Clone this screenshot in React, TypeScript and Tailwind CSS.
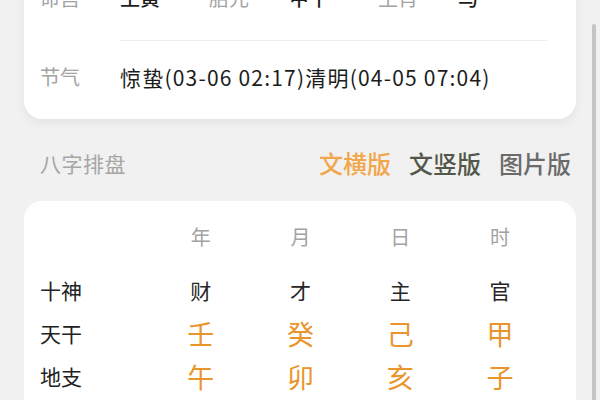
import React from "react";

const font = { fontFamily: '"Noto Sans CJK SC", "Noto Sans", sans-serif' };

function InfoPair({ label, value }: { label: string; value: string }) {
  return (
    <div className="flex w-[199px] items-center">
      <span className="w-[80px] text-[20px] leading-[20px] text-[#a3a3a3]">{label}</span>
      <span className="text-[20px] leading-[20px] font-medium text-[#1c1c1c]">{value}</span>
    </div>
  );
}

const cols = ["年", "月", "日", "时"];
const shishen = ["财", "才", "主", "官"];
const tiangan = ["壬", "癸", "己", "甲"];
const dizhi = ["午", "卯", "亥", "子"];

function Row({ label, items, orange }: { label: string; items: string[]; orange?: boolean }) {
  return (
    <div className="flex h-[43px] items-center">
      <span className="w-[111px] text-[21px] leading-[21px] text-[#222]">{label}</span>
      {items.map((c) => (
        <span
          key={c}
          className={
            orange
              ? "w-[100px] text-center text-[27px] leading-[27px] text-[#ea952c]"
              : "w-[100px] text-center text-[21px] leading-[21px] text-[#262626]"
          }
        >
          {c}
        </span>
      ))}
    </div>
  );
}

export default function App() {
  return (
    <div className="relative h-[400px] w-[600px] overflow-hidden bg-[#f1f1f1]" style={font}>
      <div className="px-[24px]">
        {/* Card 1 */}
        <div className="mt-[-40px] rounded-[18px] bg-white pl-[16px] pr-[29px] shadow-[0_4px_10px_rgba(0,0,0,0.06)]">
          <div className="flex pt-[28px] pb-[32px]">
            <InfoPair label="命宫" value="土黄" />
            <InfoPair label="胎元" value="甲午" />
            <InfoPair label="生肖" value="马" />
          </div>
          <div className="ml-[80px] h-px bg-[#ececec]" />
          <div className="flex items-center pt-[26px] pb-[32px]">
            <span className="w-[80px] text-[20px] leading-[20px] text-[#a3a3a3]">节气</span>
            <span className="text-[21px] leading-[20px] tracking-[1.2px] text-[#1c1c1c]">
              惊蛰(03-06 02:17)清明(04-05 07:04)
            </span>
          </div>
        </div>

        {/* Tabs row */}
        <div className="flex h-[82px] items-center pt-[6px] pl-[16px] pr-[5px]">
          <span className="text-[21px] leading-[21px] tracking-[0.5px] text-[#a6a6a6]">八字排盘</span>
          <div className="ml-auto flex gap-[18px] text-[24px] leading-[24px] font-medium">
            <span className="text-[#f2a64a]">文横版</span>
            <span className="text-[#53574a]">文竖版</span>
            <span className="text-[#6b6b6b]">图片版</span>
          </div>
        </div>

        {/* Card 2 */}
        <div className="rounded-[18px] bg-white pl-[16px] pr-[26px] pb-[20px]">
          <div className="flex pt-[26px] pb-[22px]">
            <span className="w-[111px]" />
            {cols.map((c) => (
              <span key={c} className="w-[100px] text-center text-[20px] leading-[20px] text-[#a3a3a3]">
                {c}
              </span>
            ))}
          </div>
          <Row label="十神" items={shishen} />
          <Row label="天干" items={tiangan} orange />
          <Row label="地支" items={dizhi} orange />
        </div>
      </div>

      {/* scrollbar */}
      <div className="absolute right-[4px] top-[24px] h-[400px] w-[4px] rounded-full bg-[#c4c4c4]" />
    </div>
  );
}
